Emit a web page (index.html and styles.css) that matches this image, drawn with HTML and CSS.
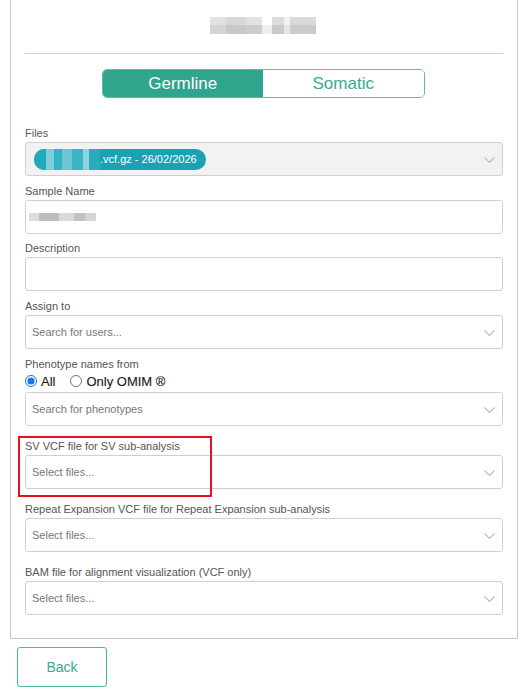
FILE: index.html
```html
<!DOCTYPE html>
<html>
<head>
<meta charset="utf-8">
<link rel="stylesheet" href="styles.css">
</head>
<body>
<div class="page">
  <div class="card">
    <div class="title" aria-label="hidden name">
      <span class="px p1"></span><span class="px p2"></span><span class="px p3"></span><span class="px p4"></span><span class="px p5"></span><span class="px p6"></span><span class="px p7"></span>
    </div>
    <div class="rule"></div>
    <div class="toggle-row">
      <div class="toggle">
        <div class="tab active">Germline</div>
        <div class="tab">Somatic</div>
      </div>
    </div>

    <div class="group first">
      <div class="label">Files</div>
      <div class="field disabled">
        <span class="chip"><span class="blur"><span class="b b1"></span><span class="b b2"></span><span class="b b3"></span></span><span class="chip-text">.vcf.gz - 26/02/2026</span></span>
        <svg class="chev" width="11" height="6" viewBox="0 0 11 6"><path d="M0.5 0.5l5 5 5-5" fill="none" stroke="#bbb" stroke-width="1.1"/></svg>
      </div>
    </div>

    <div class="group">
      <div class="label">Sample Name</div>
      <div class="field"><span class="blurname"><span class="g g1"></span><span class="g g2"></span><span class="g g3"></span><span class="g g4"></span></span></div>
    </div>

    <div class="group">
      <div class="label">Description</div>
      <div class="field"></div>
    </div>

    <div class="group">
      <div class="label">Assign to</div>
      <div class="field"><span class="ph">Search for users...</span>
        <svg class="chev" width="11" height="6" viewBox="0 0 11 6"><path d="M0.5 0.5l5 5 5-5" fill="none" stroke="#bbb" stroke-width="1.1"/></svg></div>
    </div>

    <div class="group">
      <div class="label">Phenotype names from</div>
      <div class="radios">
        <label class="radio"><input type="radio" name="ph" checked> All</label>
        <label class="radio"><input type="radio" name="ph"> Only OMIM ®</label>
      </div>
      <div class="field"><span class="ph">Search for phenotypes</span>
        <svg class="chev" width="11" height="6" viewBox="0 0 11 6"><path d="M0.5 0.5l5 5 5-5" fill="none" stroke="#bbb" stroke-width="1.1"/></svg></div>
    </div>

    <div class="group wide highlight">
      <div class="label">SV VCF file for SV sub-analysis</div>
      <div class="field"><span class="ph">Select files...</span>
        <svg class="chev" width="11" height="6" viewBox="0 0 11 6"><path d="M0.5 0.5l5 5 5-5" fill="none" stroke="#bbb" stroke-width="1.1"/></svg></div>
    </div>

    <div class="group wide">
      <div class="label">Repeat Expansion VCF file for Repeat Expansion sub-analysis</div>
      <div class="field"><span class="ph">Select files...</span>
        <svg class="chev" width="11" height="6" viewBox="0 0 11 6"><path d="M0.5 0.5l5 5 5-5" fill="none" stroke="#bbb" stroke-width="1.1"/></svg></div>
    </div>

    <div class="group wide last">
      <div class="label">BAM file for alignment visualization (VCF only)</div>
      <div class="field"><span class="ph">Select files...</span>
        <svg class="chev" width="11" height="6" viewBox="0 0 11 6"><path d="M0.5 0.5l5 5 5-5" fill="none" stroke="#bbb" stroke-width="1.1"/></svg></div>
    </div>
  </div>
  <button class="back">Back</button>
</div>
</body>
</html>
```

FILE: styles.css
```css
* { box-sizing: border-box; }
html, body { margin: 0; padding: 0; background: #fff; }
body { font-family: "Liberation Sans", Arial, sans-serif; color: #333; }
.page { padding: 0 9px 0 10px; width: 527px; }
.card {
  border: 1px solid #c8c8c8;
  border-top: none;
  padding: 17px 14px 23px 14px;
}
.title { display: flex; justify-content: center; height: 17px; margin-right: 2px; }
.px { display: inline-block; height: 17px; }
.p1 { width: 16px; background: linear-gradient(#e2e2e2 50%, #d4d4d4 50%); }
.p2 { width: 20px; background: linear-gradient(#d8d8d8 50%, #c8c8c8 50%); }
.p3 { width: 16px; background: linear-gradient(#e2e2e2 50%, #cdcdcd 50%); }
.p4 { width: 10px; background: linear-gradient(#fff 45%, #eeeeee 45%); }
.p5 { width: 12px; background: linear-gradient(#dcdcdc 50%, #c9c9c9 50%); }
.p6 { width: 6px; background: linear-gradient(#f2f2f2 50%, #e6e6e6 50%); }
.p7 { width: 26px; background: linear-gradient(#dadada 50%, #cbcbcb 50%); }
.rule { height: 1px; background: #cfcfcf; margin-top: 19px; }
.toggle-row { display: flex; justify-content: center; margin-top: 15px; margin-right: 2px; }
.toggle {
  display: flex;
  width: 323px;
  height: 29px;
  border: 1px solid #5cbfa8;
  border-radius: 5px;
  overflow: hidden;
}
.tab {
  flex: 1;
  display: flex;
  align-items: center;
  justify-content: center;
  font-size: 17px;
  color: #3aa98d;
  background: #fff;
}
.tab.active { background: #2ea58c; color: #fff; }
.group { margin-top: 7.67px; position: relative; }
.group.first { margin-top: 28px; }
.group.wide { margin-top: 13px; }
.label { font-size: 11px; line-height: 14px; color: #555; margin-bottom: 2px; }
.field {
  position: relative;
  height: 34px;
  border: 1px solid #cfcfcf;
  border-radius: 3px;
  display: flex;
  align-items: center;
  padding: 0 6px;
  background: #fff;
}
.field.disabled { background: #f2f2f2; padding-left: 8px; }
.ph { font-size: 11px; color: #777; }
.chev { position: absolute; right: 7px; top: 14px; }
.chip {
  display: inline-flex;
  align-items: center;
  height: 21px;
  border-radius: 11px;
  background: #1aa2b4;
  overflow: hidden;
  padding-right: 9px;
}
.blur { display: flex; height: 21px; }
.b { display: inline-block; height: 21px; }
.b1 { width: 12px; background: #22a8b8; }
.b2 { width: 26px; background: linear-gradient(90deg, #7ccfd8 0 30%, #36b3c2 30% 60%, #6ac8d2 60%); }
.b3 { width: 28px; background: linear-gradient(90deg, #3db4c3 0 40%, #8bd4dc 40% 60%, #2aaabc 60%); }
.chip-text { color: #fff; font-size: 11px; margin-left: 0; }
.blurname { display: flex; height: 8px; margin-left: -3px; }
.g { display: inline-block; height: 8px; }
.g1 { width: 10px; background: #dcdcdc; }
.g2 { width: 20px; background: #bdbdbd; }
.g3 { width: 15px; background: #dadada; }
.g4 { width: 22px; background: linear-gradient(90deg, #c2c2c2 0 50%, #d4d4d4 50%); }
.radios { display: flex; gap: 15px; height: 17px; align-items: center; margin-bottom: 2px; }
.radio { display: flex; align-items: center; font-size: 13px; color: #1e1e1e; -webkit-text-stroke: 0.15px #1e1e1e; }
.radio input { margin: 0 4px 0 0; width: 12px; height: 12px; accent-color: #1a73e8; }
.highlight::after {
  content: "";
  position: absolute;
  left: -7px;
  top: -3px;
  width: 190px;
  height: 57px;
  border: 2px solid #e3131b;
}
.back {
  margin: 8px 0 0 7px;
  width: 90px;
  height: 40px;
  border: 1px solid #4bb89c;
  border-radius: 3px;
  background: #fff;
  color: #3aa98d;
  font-family: "Liberation Sans", Arial, sans-serif;
  font-size: 14px;
}
```
